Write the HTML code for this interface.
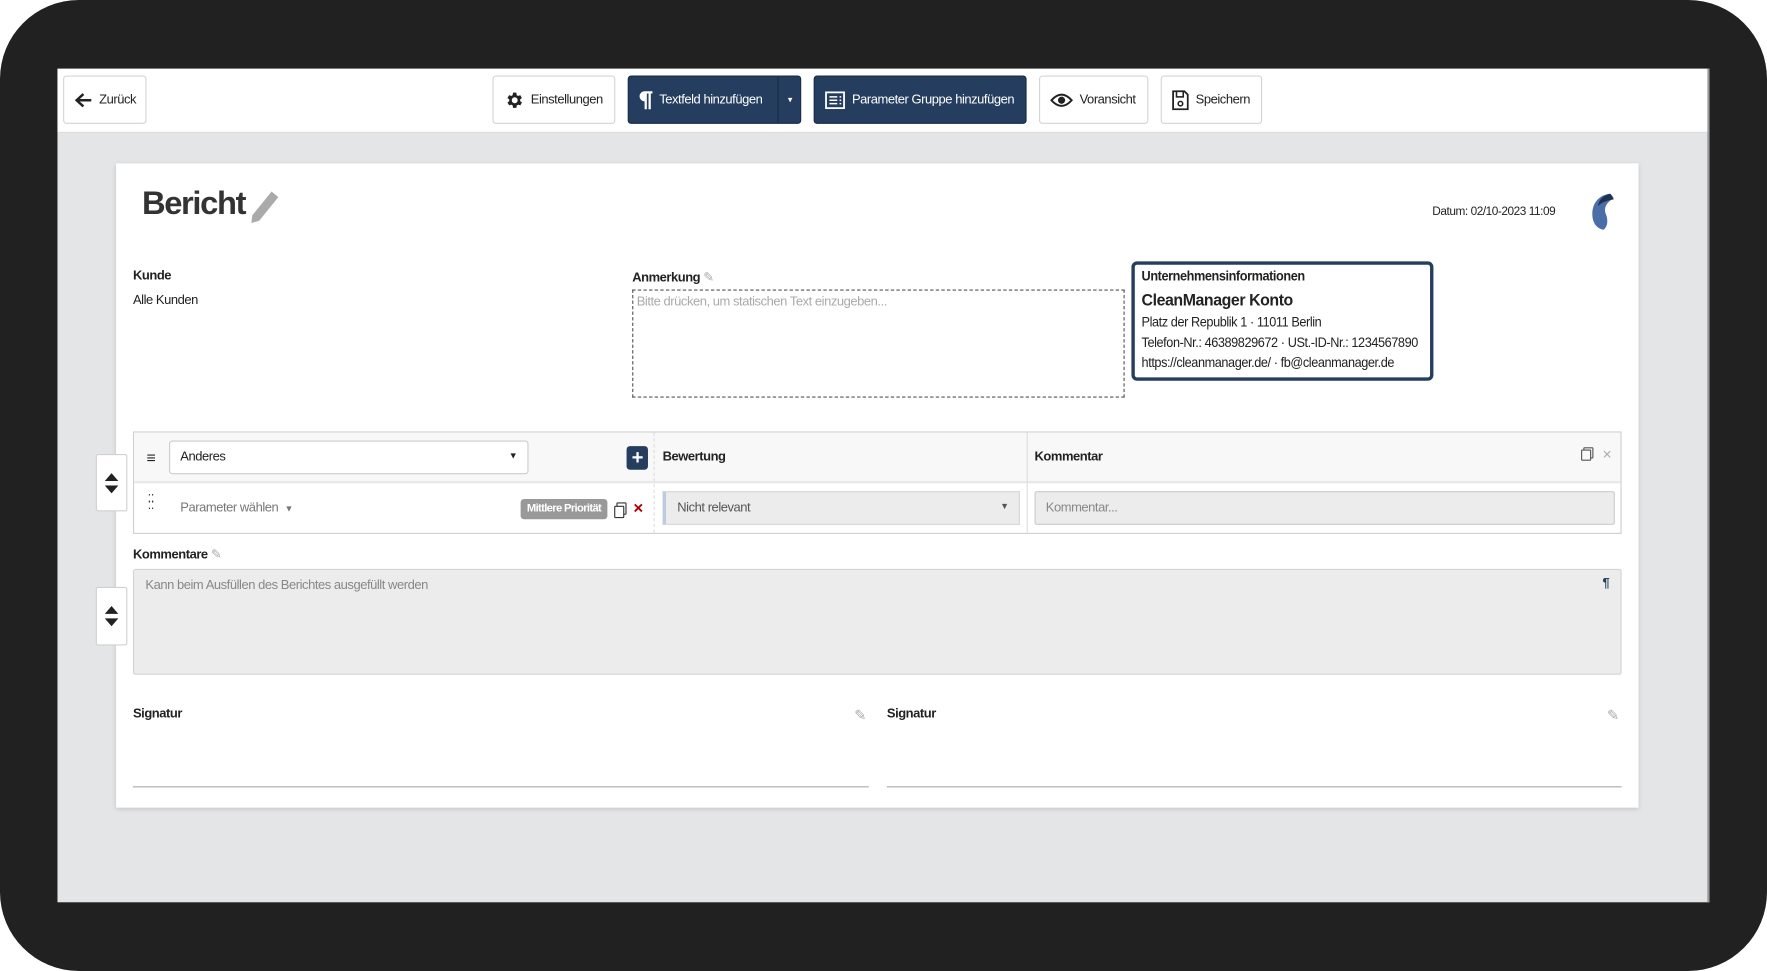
<!DOCTYPE html>
<html><head><meta charset="utf-8"><style>
*{box-sizing:border-box;margin:0;padding:0}
html,body{width:1767px;height:971px;overflow:hidden;background:#fff}
body{font-family:"Liberation Sans",Arial,sans-serif;color:#222}
#s{position:absolute;left:0;top:0;width:1568px;height:862px;transform-origin:0 0;transform:scale(1.12691,1.12645);background:#fff;letter-spacing:-0.4px;white-space:nowrap}
.blk{position:absolute;left:0;top:0;width:1568px;height:862px;background:#222122;border-radius:70px}
.app{position:absolute;left:51px;top:61px;width:1466px;height:740px;background:#e4e5e7;border-right:2px solid #9a9a9a}
.tb{position:absolute;left:0;top:0;width:100%;height:57px;background:#fff;border-bottom:1px solid #dcdcdc}
.a{position:absolute}
.btn{position:absolute;top:6px;height:43px;border:1px solid #d4d4d4;border-radius:3px;background:#fff;font-size:11.5px;display:flex;align-items:center;padding-left:9px;gap:6px;color:#222}
.dk{background:#253d5e;border-color:#1b2d46;color:#fff}
.card{position:absolute;left:52px;top:84px;width:1351px;height:572px;background:#fff;box-shadow:0 1px 4px rgba(0,0,0,.15)}
.lb{position:absolute;font-size:11.5px;font-weight:bold}
.tx{position:absolute;font-size:11.5px}
.side{position:absolute;width:28px;background:#fff;border:1px solid #d0d0d0;border-radius:2px;display:flex;align-items:center;justify-content:center}
.pen{color:#aaa;font-weight:normal}
</style></head><body><div id="s">
<div class="blk"></div>
<div class="app">
 <div class="tb">
  <div class="btn" style="left:5px;width:74px"><svg width="16" height="14" viewBox="0 0 16 14"><path d="M15 7H3M8 1.5L2 7l6 5.5" stroke="#222" stroke-width="2.2" fill="none"/></svg>Zurück</div>
  <div class="btn" style="left:386px;width:109px"><svg width="18" height="18" viewBox="0 0 24 24"><path fill="#222" d="M19.4 13a7.5 7.5 0 000-2l2.1-1.6-2-3.5-2.5 1a7 7 0 00-1.7-1L15 3h-4l-.4 2.9a7 7 0 00-1.7 1l-2.5-1-2 3.5L6.6 11a7.5 7.5 0 000 2l-2.2 1.6 2 3.5 2.5-1a7 7 0 001.7 1L11 21h4l.4-2.9a7 7 0 001.7-1l2.5 1 2-3.5zM13 15.5A3.5 3.5 0 1113 8.5a3.5 3.5 0 010 7z"/></svg>Einstellungen</div>
  <div class="btn dk" style="left:506px;width:154px"><svg width="12" height="18" viewBox="0 0 12 18"><path fill="#fff" d="M5 1h7v2h-1.5v14H8.5V3H7v14H5V10A4.5 4.5 0 015 1z"/></svg>Textfeld hinzufügen<span style="position:absolute;left:132px;top:0;height:41px;border-left:1px solid #1a2b42;width:21px;display:flex;align-items:center;justify-content:center;font-size:8px">▾</span></div>
  <div class="btn dk" style="left:671px;width:189px"><svg width="18" height="16" viewBox="0 0 18 16"><rect x="1" y="1" width="16" height="14" fill="none" stroke="#fff" stroke-width="1.6"/><path d="M4 5h7M4 8h7M4 11h7M13 5h1.5M13 8h1.5M13 11h1.5" stroke="#fff" stroke-width="1.4"/></svg>Parameter Gruppe hinzufügen</div>
  <div class="btn" style="left:871px;width:97px"><svg width="20" height="14" viewBox="0 0 20 14"><path d="M1 7Q10-3 19 7 10 17 1 7z" fill="none" stroke="#222" stroke-width="1.8"/><circle cx="10" cy="7" r="3.2" fill="#222"/></svg>Voransicht</div>
  <div class="btn" style="left:979px;width:90px"><svg width="15" height="18" viewBox="0 0 15 18"><path d="M1 1h10l3 3v13H1z" fill="none" stroke="#222" stroke-width="1.6"/><rect x="4" y="1" width="6" height="5" fill="none" stroke="#222" stroke-width="1.4"/><circle cx="7.5" cy="12" r="2" fill="none" stroke="#222" stroke-width="1.4"/></svg>Speichern</div>
 </div>
 <div class="card">
  <div class="a" style="left:23px;top:20px;font-size:29px;font-weight:bold;color:#333;letter-spacing:-1.2px">Bericht</div>
  <svg class="a" style="left:118px;top:23px" width="28" height="32" viewBox="0 0 28 32"><path d="M20 2l6 5L9 28l-7 2 1-7z" fill="#aaa"/></svg>
  <div class="tx" style="left:1168px;top:37px;font-size:10.5px">Datum: 02/10-2023 11:09</div>
  <svg class="a" style="left:1302px;top:25px" width="30" height="36" viewBox="0 0 30 36"><path d="M24 2C14 3 8 10 8 20c0 8 4 13 10 14 4-3 4-9 2-14-2-5 0-10 7-14-1-2-2-3-3-4z" fill="#4a6ea8"/><path d="M24 2c-6 1-10 5-11 11 3-3 7-5 14-6z" fill="#1f3350"/></svg>
  <div class="lb" style="left:15px;top:94px">Kunde</div>
  <div class="tx" style="left:15px;top:116px">Alle Kunden</div>
  <div class="lb" style="left:458px;top:94px">Anmerkung <span class="pen">✎</span></div>
  <div class="a" style="left:458px;top:112px;width:437px;height:96px;border:1px dashed #555;font-size:11.5px;color:#aaa;padding:4px 3px">Bitte drücken, um statischen Text einzugeben...</div>
  <div class="a" style="left:901px;top:87px;width:268px;height:106px;border:3px solid #253d5e;border-radius:5px;padding:3px 6px">
   <div style="transform:scaleX(.94);transform-origin:0 0">
   <div style="font-size:12px;font-weight:bold">Unternehmensinformationen</div>
   <div style="font-size:15px;font-weight:bold;margin-top:6px">CleanManager Konto</div>
   <div style="font-size:12px;margin-top:2px;line-height:18px">Platz der Republik 1 · 11011 Berlin<br>Telefon-Nr.: 46389829672 · USt.-ID-Nr.: 1234567890<br>https://cleanmanager.de/ · fb@cleanmanager.de</div>
   </div>
  </div>
  <div class="a" style="left:15px;top:238px;width:1321px;height:91px;border:1px solid #cfcfcf;background:#fff">
   <div class="a" style="left:0;top:0;width:100%;height:45px;background:#f8f8f8;border-bottom:2px solid #e8e8e8"></div>
   <div class="a" style="left:461px;top:0;height:89px;border-left:1px dashed #ddd"></div>
   <div class="a" style="left:792px;top:0;height:89px;border-left:1px solid #ddd"></div>
   <div class="a" style="left:11px;top:14px;font-size:14px">≡</div>
   <div class="a" style="left:31px;top:7px;width:319px;height:30px;border:1px solid #ccc;border-radius:3px;background:#fff;font-size:11.5px;padding:8px 9px">Anderes<span style="position:absolute;right:9px;top:8px;font-size:8px">▼</span></div>
   <div class="a" style="left:437px;top:12px;width:19px;height:21px;background:#253d5e;border-radius:3px;color:#fff;font-size:18px;font-weight:bold;text-align:center;line-height:20px">+</div>
   <div class="lb" style="left:469px;top:16px">Bewertung</div>
   <div class="lb" style="left:799px;top:16px">Kommentar</div>
   <div class="a" style="left:1286px;top:13px;width:9px;height:10px;border:1px solid #555;border-radius:1px"></div>
   <div class="a" style="left:1284px;top:15px;width:9px;height:10px;border:1px solid #555;border-radius:1px;background:#f8f8f8"></div>
   <div class="a" style="left:1303px;top:11px;color:#aaa;font-size:14px">×</div>
   <div class="a" style="left:12px;top:57px;font-size:10px;line-height:6px;color:#333">⁚⁚<br>⁚⁚</div>
   <div class="tx" style="left:41px;top:61px;color:#777">Parameter wählen &nbsp;<span style="font-size:8px">▼</span></div>
   <div class="a" style="left:343px;top:59px;width:77px;height:18px;background:#999;border-radius:3px;color:#fff;font-size:10px;font-weight:bold;text-align:center;line-height:17px;letter-spacing:-0.6px">Mittlere Priorität</div>
   <div class="a" style="left:428px;top:62px;width:9px;height:11px;border:1px solid #333;border-radius:1px"></div>
   <div class="a" style="left:426px;top:65px;width:9px;height:11px;border:1px solid #333;border-radius:1px;background:#fff"></div>
   <div class="a" style="left:443px;top:59px;color:#a00;font-size:15px;font-weight:bold">×</div>
   <div class="a" style="left:469px;top:52px;width:317px;height:30px;background:#ececec;border:1px solid #d7d7d7;border-left:3px solid #bccbe0;font-size:11.5px;color:#555;padding:8px 10px">Nicht relevant<span style="position:absolute;right:9px;top:8px;font-size:8px">▼</span></div>
   <div class="a" style="left:799px;top:52px;width:515px;height:30px;background:#ececec;border:1px solid #ccc;border-radius:2px;font-size:11.5px;color:#888;padding:8px 9px">Kommentar...</div>
  </div>
  <div class="lb" style="left:15px;top:340px">Kommentare <span class="pen">✎</span></div>
  <div class="a" style="left:15px;top:360px;width:1321px;height:94px;background:#ececec;border:1px solid #d4d4d4;border-radius:2px;font-size:11.5px;color:#888;padding:8px 10px">Kann beim Ausfüllen des Berichtes ausgefüllt werden<span style="position:absolute;right:10px;top:6px;color:#253d5e;font-weight:bold">¶</span></div>
  <div class="lb" style="left:15px;top:483px">Signatur</div>
  <div class="a" style="left:655px;top:482px;color:#aaa;font-size:13px">✎</div>
  <div class="a" style="left:15px;top:553px;width:653px;border-top:1px solid #aaa"></div>
  <div class="lb" style="left:684px;top:483px">Signatur</div>
  <div class="a" style="left:1323px;top:482px;color:#aaa;font-size:13px">✎</div>
  <div class="a" style="left:684px;top:553px;width:652px;border-top:1px solid #aaa"></div>
 </div>
 <div class="side" style="left:34px;top:342px;height:51px"><svg width="12" height="18" viewBox="0 0 12 18"><path d="M6 0l6 7H0zM6 18l6-7H0z" fill="#222"/></svg></div>
 <div class="side" style="left:34px;top:460px;height:52px"><svg width="12" height="18" viewBox="0 0 12 18"><path d="M6 0l6 7H0zM6 18l6-7H0z" fill="#222"/></svg></div>
</div>
</div></body></html>
